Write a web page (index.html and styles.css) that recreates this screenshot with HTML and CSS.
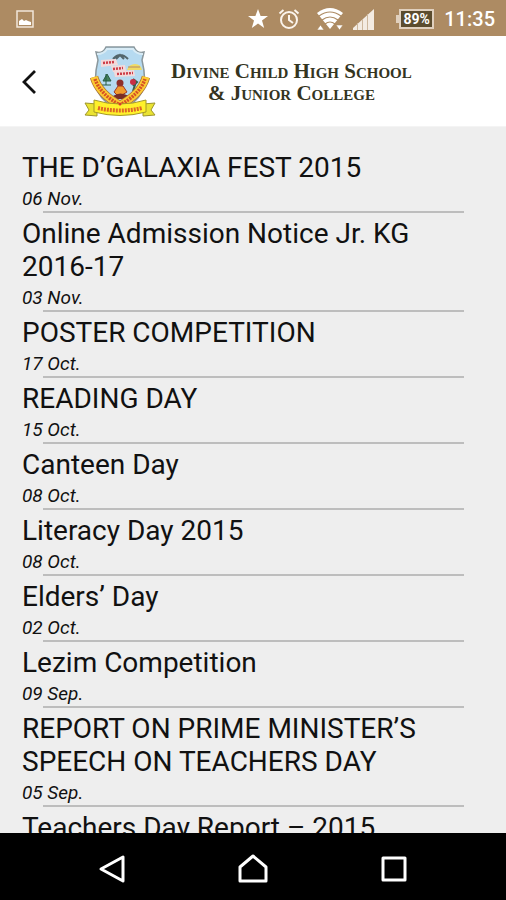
FILE: index.html
```
<!DOCTYPE html>
<html lang="en">
<head>
<meta charset="utf-8">
<meta name="viewport" content="width=device-width, initial-scale=1">
<title>Divine Child High School – Notices</title>
<link rel="stylesheet" href="styles.css">
</head>
<body>
<div class="status">
  <svg class="status-photo" width="18" height="18" viewBox="0 0 18 18" aria-hidden="true"><rect x="1" y="1" width="16" height="16" fill="none" stroke="#f1e6da" stroke-width="1.5"/><path d="M3 15v-4l3-2 2 2 2-1 2 1 3 1v3z" fill="#fff"/></svg>
  <div class="status-icons">
    <svg width="22" height="22" viewBox="0 0 22 22" aria-hidden="true"><path d="M11 1l2.6 7H21l-6 4.400 2.200 7.600L11 15.500 4.800 20 7 12.400 1 8h7.400z" fill="#fff"/></svg>
    <svg class="alarm" width="22" height="22" viewBox="0 0 22 22" fill="none" stroke="#fbf4ec" stroke-width="2" aria-hidden="true"><circle cx="11" cy="12" r="8"/><path d="M11 7v5l4 3M1.500 5.500l4-3.500M20.500 5.500l-4-3.500"/></svg>
    <svg class="wifi" width="28" height="24" viewBox="0 0 28 24" aria-hidden="true"><path d="M1 6Q14-4 27 6L14 22z" fill="#fff"/><path d="M3 9Q14 1 25 9M6 13Q14 7 22 13M9 17Q14 13 19 17" fill="none" stroke="#ad8b63" stroke-width="1.200"/><path d="M1 23l3.500-5L8 23zM20 18h7l-3.500 5z" fill="#fff" stroke="#ad8b63" stroke-width=".6"/></svg>
    <svg class="signal" width="22" height="22" viewBox="0 0 22 22" aria-hidden="true"><path d="M0 22v-2L21 1v21z" fill="#f3ebe2"/><path d="M4.500 15v7M9.500 11v11M14.500 6v16" stroke="#cdb79d" stroke-width="1"/></svg>
    <span class="battery">89%</span>
    <time class="clock">11:35</time>
  </div>
</div>
<header class="header">
  <button class="back" type="button" aria-label="Back"><svg width="16" height="26" viewBox="0 0 16 26"><path d="M14 2L3 13l11 11" fill="none" stroke="#111" stroke-width="2.800"/></svg></button>
  <svg class="crest" width="72" height="72" viewBox="0 0 72 72" role="img" aria-label="School crest">
    <path d="M12 6q7 2 10-5h28q3 7 10 5l-2 8q5 21 0 32-6 12-22 18-16-6-22-18-5-11 0-32z" fill="#b6daf0" stroke="#8b989d" stroke-width="1.500"/>
    <path d="M13 8q7 0 10-5h26q3 5 10 5" fill="none" stroke="#d8ebf5" stroke-width="2"/>
    <path d="M29 13q7-8 15 0M32 13l4-4 4 4" fill="none" stroke="#53666b" stroke-width="2"/>
    <path d="M17 14l15-1 2 6-17 2zM27 20l14-1 1 6-13 1zM30 26l20-2 1 6-20 1z" fill="#f3dada"/>
    <path d="M19 17l12-1M29 23l10-1M33 28l16-1" stroke="#cc3c47" stroke-width="2.500" stroke-dasharray="2 1"/>
    <path d="M43 24q2-6 8-6t7 6z" fill="#efdb64"/><path d="M44 21h12" stroke="#b58864"/>
    <path d="M18 39h9M19 35l4-7 4 7zM22 28v11" fill="#43815c" stroke="#285c43"/>
    <path d="M49 33l4 3-4 4M52 36l-3 9" fill="none" stroke="#375d48" stroke-width="2"/><circle cx="49" cy="36" r="3" fill="#c82e44"/>
    <circle cx="36" cy="37" r="3.500" fill="#8e302b"/><path d="M30 46l4-6h5l4 6-5 3h-5z" fill="#f09b2d" stroke="#9c382b"/><path d="M29 50q7-5 16 0l-4 3H33z" fill="#792d25"/>
    <path d="M10 31q5 17 26 28 21-11 26-28" fill="none" stroke="#ad7336" stroke-width="8.500"/>
    <path d="M10 31q5 17 26 28 21-11 26-28" fill="none" stroke="#fccc33" stroke-width="7"/>
    <path d="M11 33q5 15 25 26 20-11 25-26" fill="none" stroke="#d75323" stroke-width="3.500" stroke-dasharray="2 1"/>
    <path d="M1 57l12 1v12l-12-1 4-5zM71 57l-12 1v12l12-1-4-5z" fill="#eae332" stroke="#9d952c"/>
    <path d="M10 54q26 8 52 0v12q-26 7-52 0z" fill="#fff12b" stroke="#a69a28"/>
    <path d="M14 62q22 5 44 0" fill="none" stroke="#de6826" stroke-width="4" stroke-dasharray="2 1"/><circle cx="36" cy="58" r="1.500" fill="#d9362f"/>
  </svg>
  <h1 class="school">Divine Child High School<br>&amp; Junior College</h1>
</header>
<main class="notices">
  <ul class="list">
    <li class="notice"><h2>THE D’GALAXIA FEST 2015</h2><p>06 Nov.</p></li>
    <li class="notice"><h2>Online Admission Notice Jr. KG 2016-17</h2><p>03 Nov.</p></li>
    <li class="notice"><h2>POSTER COMPETITION</h2><p>17 Oct.</p></li>
    <li class="notice"><h2>READING DAY</h2><p>15 Oct.</p></li>
    <li class="notice"><h2>Canteen Day</h2><p>08 Oct.</p></li>
    <li class="notice"><h2>Literacy Day 2015</h2><p>08 Oct.</p></li>
    <li class="notice"><h2>Elders’ Day</h2><p>02 Oct.</p></li>
    <li class="notice"><h2>Lezim Competition</h2><p>09 Sep.</p></li>
    <li class="notice"><h2>REPORT ON PRIME MINISTER’S SPEECH ON TEACHERS DAY</h2><p>05 Sep.</p></li>
    <li class="notice"><h2>Teachers Day Report – 2015</h2></li>
  </ul>
</main>
<nav class="nav" aria-label="System">
  <button type="button" aria-label="Back"><svg width="28" height="30" viewBox="0 0 28 30"><path d="M25 3v24L3 15z"/></svg></button>
  <button type="button" aria-label="Home"><svg width="30" height="30" viewBox="0 0 30 30"><path d="M2 27V13L15 2l13 11v14z"/></svg></button>
  <button type="button" aria-label="Recent apps"><svg width="26" height="26" viewBox="0 0 26 26"><path d="M2 2h22v22H2z"/></svg></button>
</nav>
</body>
</html>
```
FILE: styles.css
```
* { box-sizing: border-box; }
body {
  margin: 0;
  height: 100vh;
  display: flex;
  flex-direction: column;
  background: #eee;
  color: #111;
  font-family: Roboto, "Liberation Sans", sans-serif;
}
button { border: 0; background: none; padding: 0; display: flex; align-items: center; justify-content: center; }
svg { display: block; flex: none; }
.status {
  flex: none;
  height: 36px;
  padding: 1px 11px 0 16px;
  display: flex;
  align-items: center;
  justify-content: space-between;
  background: #ad8b63;
  color: #fff;
}
.status-icons { display: flex; align-items: center; }
.alarm { margin-left: 9px; }
.wifi { margin-left: 16px; }
.signal { margin-left: 9px; }
.battery {
  position: relative;
  margin-left: 24px;
  width: 35px;
  height: 20px;
  border: 2px solid #e0d0be;
  background: #5b4c2e;
  font-size: 14px;
  line-height: 16px;
  font-weight: 700;
  text-align: center;
}
.battery::before {
  content: "";
  position: absolute;
  left: -5px;
  top: 4px;
  width: 3px;
  height: 8px;
  background: #e0d0be;
}
.clock { margin-left: 10px; font-size: 20px; line-height: 24px; font-weight: 500; }
.header {
  flex: none;
  height: 91px;
  padding: 1px 0 0 12px;
  display: flex;
  align-items: center;
  background: #fff;
  border-bottom: 1px solid #f4f4f4;
}
.back { width: 34px; height: 48px; }
.crest { margin-left: 38px; }
.school {
  margin: 0 0 0 15px;
  font-family: "Liberation Serif", serif;
  font-variant: small-caps;
  font-size: 21px;
  line-height: 22px;
  font-weight: 700;
  text-align: center;
  color: #34351f;
}
.notices { flex: 1; min-height: 0; overflow: hidden; padding: 20px 42px 0 22px; }
.list { margin: 0; padding: 0; list-style: none; }
.notice { padding-top: 4px; }
.notice h2 { margin: 0; font-size: 28px; line-height: 33px; font-weight: 400; }
.notice p { margin: 0; padding-top: 3px; font-size: 19px; line-height: 24px; font-style: italic; }
.notice::after { content: ""; display: block; height: 2px; margin-left: 21px; background: #bdbdbd; }
.nav {
  flex: none;
  height: 67px;
  padding: 4px 42px 0;
  display: grid;
  grid-template-columns: repeat(3, 1fr);
  background: #000;
}
.nav path { fill: none; stroke: #fff; stroke-width: 3; stroke-linejoin: round; }
```
